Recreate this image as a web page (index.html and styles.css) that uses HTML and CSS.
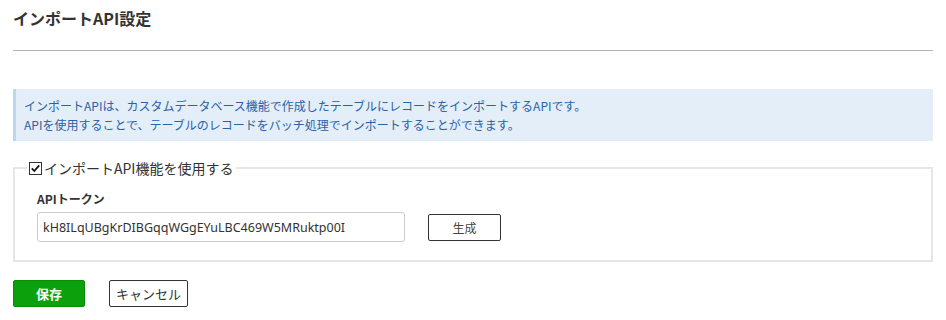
FILE: index.html
```html
<!DOCTYPE html>
<html lang="ja">
  <head>
    <meta charset="UTF-8" />
    <meta name="viewport" content="width=device-width, initial-scale=1.0" />
    <title>インポートAPI設定</title>
    <link rel="stylesheet" href="styles.css">
  </head>
  <body>
    <div class="page">
      <div class="page-header">
        <h2>インポートAPI設定</h2>
      </div>

      <div class="info-box">
        インポートAPIは、カスタムデータベース機能で作成したテーブルにレコードをインポートするAPIです。<br />
        APIを使用することで、テーブルのレコードをバッチ処理でインポートすることができます。
      </div>

      <form id="importApiForm">
        <fieldset class="api-fieldset">
          <legend>
            <label class="check-label">
              <span class="check-box">
                <svg width="13" height="13" viewBox="0 0 13 13">
                  <rect x="0.5" y="0.5" width="12" height="12" fill="#fff" stroke="#333" />
                  <path d="M2.8 6.4 L5.3 9 L10.2 3.4" fill="none" stroke="#111" stroke-width="1.8" />
                </svg>
              </span>
              インポートAPI機能を使用する
            </label>
          </legend>

          <div class="field-label">APIトークン</div>
          <div class="token-row">
            <input type="text" class="token-input" value="kH8ILqUBgKrDIBGqqWGgEYuLBC469W5MRuktp00I" />
            <button type="button" class="btn btn-sub">生成</button>
          </div>
        </fieldset>

        <div class="actions">
          <button type="submit" class="btn btn-save">保存</button>
          <button type="button" class="btn btn-cancel">キャンセル</button>
        </div>
      </form>
    </div>
  </body>
</html>
```

FILE: styles.css
```css
body {
  font-family: "Noto Sans CJK JP", "Noto Sans", sans-serif;
  background-color: #fff;
  color: #333;
  margin: 0;
  padding: 0;
  font-size: 12px;
}
.page {
  padding: 0 13px;
}
.page-header {
  height: 51px;
  border-bottom: 1px solid #b4b4b4;
  box-sizing: border-box;
}
.page-header h2 {
  margin: 0;
  padding-top: 8px;
  font-size: 16px;
  line-height: 20px;
  font-weight: bold;
  color: #333;
}
.info-box {
  margin-top: 38px;
  background-color: #e3eef9;
  border-left: 3px solid #bcd6ef;
  color: #2862a8;
  padding: 7px 10px 7px 8px;
  line-height: 19px;
  font-size: 12px;
}
.api-fieldset {
  margin: 17px 0 0;
  border: 2px solid #e6e6e6;
  padding: 12px 22px 18px;
  min-width: 0;
}
.api-fieldset legend {
  margin-left: -10px;
  padding: 0 3px 0 2px;
  line-height: 20px;
  font-size: 14px;
  color: #333;
}
.check-label {
  display: flex;
  align-items: center;
  gap: 2px;
}
.check-box {
  display: inline-flex;
  width: 13px;
  height: 13px;
}
.field-label {
  font-weight: bold;
  line-height: 18px;
  margin-bottom: 4px;
}
.token-row {
  display: flex;
  align-items: center;
  gap: 23px;
}
.token-input {
  width: 368px;
  height: 30px;
  padding: 0 5px;
  border: 1px solid #ccc;
  border-radius: 3px;
  box-sizing: border-box;
  font-family: "Noto Sans", sans-serif;
  font-size: 12.5px;
  color: #333;
}
.btn {
  height: 27px;
  border-radius: 2px;
  box-sizing: border-box;
  font-family: "Noto Sans CJK JP", sans-serif;
  font-size: 12px;
  cursor: pointer;
  padding: 0;
}
.btn-sub {
  width: 73px;
  background-color: #fff;
  border: 1px solid #333;
  color: #444;
}
.actions {
  display: flex;
  gap: 24px;
  margin-top: 18px;
}
.btn-save {
  width: 72px;
  background-color: #0ca10c;
  border: 1px solid #098c09;
  color: #fff;
  font-weight: bold;
  font-size: 13px;
}
.btn-cancel {
  width: 79px;
  background-color: #fff;
  border: 1px solid #333;
  color: #333;
  font-size: 13px;
}
```
